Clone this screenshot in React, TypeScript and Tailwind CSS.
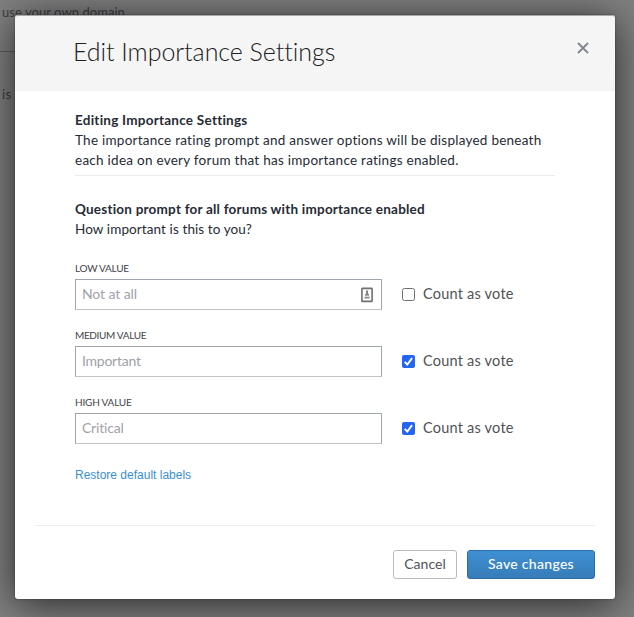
import React from "react";

type Field = { label: string; value: string; checked: boolean; contact?: boolean; labelClass: string; valueClass: string };

const fields: Field[] = [
  { label: "LOW VALUE", value: "Not at all", checked: false, contact: true, labelClass: "tracking-[-0.25px]", valueClass: "tracking-[-0.1px]" },
  { label: "MEDIUM VALUE", value: "Important", checked: true, labelClass: "tracking-[-0.35px]", valueClass: "tracking-[-0.25px]" },
  { label: "HIGH VALUE", value: "Critical", checked: true, labelClass: "tracking-[-0.2px]", valueClass: "tracking-[-0.2px]" },
];

function ContactIcon() {
  return (
    <svg width="12" height="16" viewBox="0 0 12 16" fill="none">
      <rect x="0.9" y="1.4" width="10.2" height="13" rx="0.5" stroke="#707070" strokeWidth="1.6" />
      <path d="M6 3.6v3.6" stroke="#777" strokeWidth="1.8" />
      <path d="M3.4 10.6h5.2" stroke="#8b8b8b" strokeWidth="1.8" />
      <path d="M4 7.8h4" stroke="#888" strokeWidth="1.8" />
    </svg>
  );
}

function CheckBox({ checked }: { checked: boolean }) {
  if (!checked) return <span className="block h-[13px] w-[13px] rounded-[2.5px] border border-[#6f6f73] bg-white" />;
  return (
    <span className="block h-[13px] w-[13px] rounded-[2px] bg-[#2465f1]">
      <svg width="13" height="13" viewBox="0 0 13 13" fill="none">
        <path d="M2.7 6.9l2.6 2.6 4.8-6.3" stroke="#fff" strokeWidth="1.9" />
      </svg>
    </span>
  );
}

export default function App() {
  return (
    <div className="relative flex h-[617px] w-[634px] items-start overflow-hidden bg-[#818181] font-['Lato',sans-serif] whitespace-nowrap text-[#262b35] [font-variant-ligatures:none]">
      <div className="absolute top-[3px] left-[2px] text-[13px] leading-[18px] tracking-[0.05px] text-[#3c3e42]">use your own domain</div>
      <div className="absolute top-[51px] left-0 h-px w-4 bg-[#5f5f5f]" />
      <div className="absolute top-[85px] left-[2px] text-[13px] leading-[18px] tracking-[0.3px] text-[#3c3e42]">is</div>

      <div className="relative mt-[15px] ml-[15px] flex h-[584px] w-[600px] flex-col rounded-[3px] bg-white shadow-[0_0_2px_rgba(0,0,0,0.45),0_5px_40px_rgba(0,0,0,0.7)]">
        <header className="flex h-[76px] shrink-0 items-start justify-between rounded-t-[3px] border-t border-[#a9a9a9] bg-[#f5f5f5] pr-[26px] pl-[58px]">
          <h1 className="pt-[17px] text-[25px] leading-9 font-light tracking-[-0.05px] text-[#202020]">Edit Importance Settings</h1>
          <svg className="mt-[26px]" width="12" height="12" viewBox="0 0 12 12" fill="none">
            <path d="M1 1l10 10M11 1L1 11" stroke="#80868f" strokeWidth="1.8" />
          </svg>
        </header>

        <main className="flex h-[433px] shrink-0 flex-col px-[60px] pt-[19px] text-[13.5px] leading-5">
          <section className="h-[66px] w-[480px] border-b border-[#e9ebef]">
            <h2 className="font-bold tracking-[0.25px]">Editing Importance Settings</h2>
            <p className="tracking-[0.25px]">The importance rating prompt and answer options will be displayed beneath</p>
            <p className="tracking-[0.26px]">each idea on every forum that has importance ratings enabled.</p>
          </section>
          <section className="pt-[23px]">
            <h2 className="font-bold tracking-[0.22px]">Question prompt for all forums with importance enabled</h2>
            <p className="tracking-[0.1px]">How important is this to you?</p>
          </section>
          <div className="flex flex-col pt-[21px]">
            {fields.map((f) => (
              <div key={f.label} className="h-[67px]">
                <div className={`h-[19px] text-[10px] leading-[16px] text-[#414349] ${f.labelClass}`}>{f.label}</div>
                <div className="flex items-center">
                  <div className="flex h-[31px] w-[307px] items-center justify-between border border-[#9fa6ae] border-b-[#c0c5ca] pr-2 pl-1.5">
                    <span className={`pb-0.5 text-[14px] text-[#a1a1a9] ${f.valueClass}`}>{f.value}</span>
                    {f.contact && <ContactIcon />}
                  </div>
                  <div className="ml-5 flex items-center gap-2">
                    <CheckBox checked={f.checked} />
                    <span className="pb-0.5 text-[14.5px] tracking-[0.22px] text-[#505257]">Count as vote</span>
                  </div>
                </div>
              </div>
            ))}
          </div>
          <a className="mt-[6px] font-['Liberation_Sans',sans-serif] text-[12px] leading-4 text-[#3a8fd2]">Restore default labels</a>
        </main>

        <footer className="mx-5 flex flex-1 items-start pt-px text-[14px] leading-[18px]">
          <div className="flex flex-1 justify-end gap-[10px] border-t border-[#eeeef1] pt-6">
            <button className="h-[29px] w-16 rounded-[3px] border border-[#b9bcbf] bg-white pb-0.5 tracking-[0.05px] text-[#505257]">Cancel</button>
            <button className="h-[29px] w-32 rounded-[3px] border border-[#2e6da6] bg-linear-to-b from-[#3f90d3] to-[#367cb8] pb-0.5 font-medium tracking-[0.3px] text-white">Save changes</button>
          </div>
        </footer>
      </div>
    </div>
  );
}
